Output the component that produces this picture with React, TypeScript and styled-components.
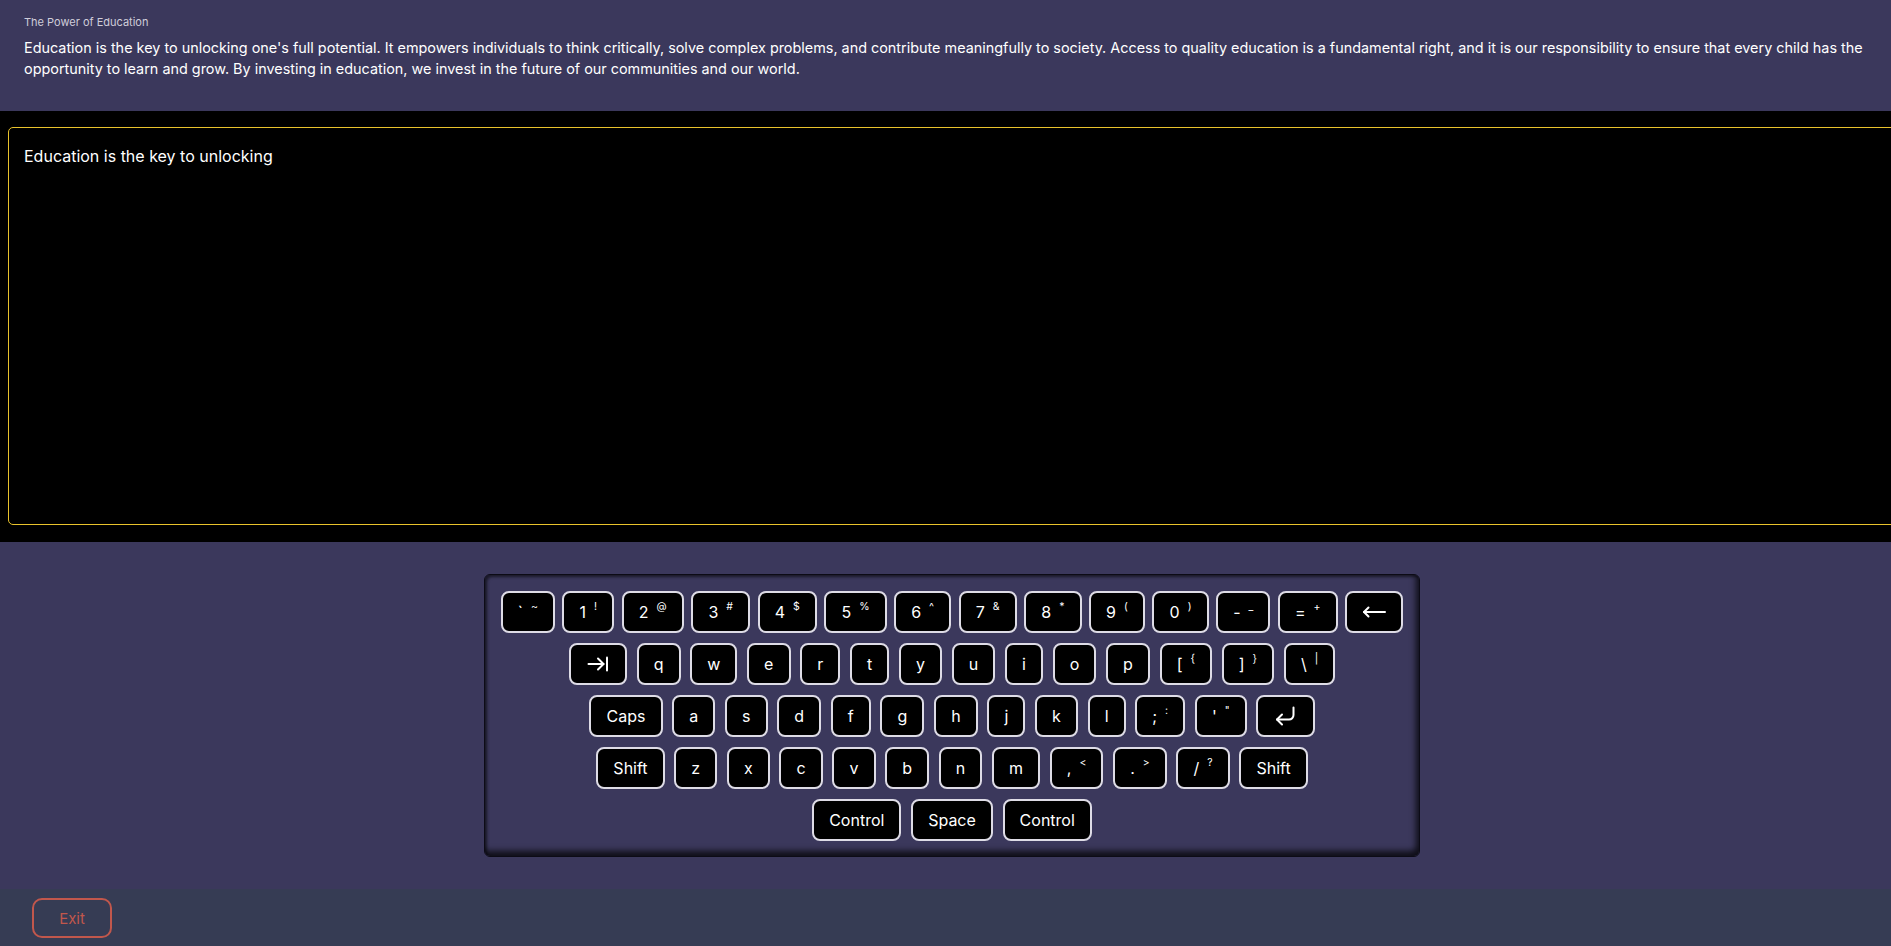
import React from "react";
import styled, { createGlobalStyle } from "styled-components";

const GlobalStyle = createGlobalStyle`
  html, body { margin: 0; padding: 0; background: #000; overflow: hidden; }
  body { font-family: Inter, "Noto Sans", sans-serif; }
  *, *::before, *::after { box-sizing: border-box; }
`;

const Page = styled.div`
  display: flex;
  flex-direction: column;
  width: 1891px;
  height: 946px;
  overflow: hidden;
`;

const Header = styled.header`
  background: #3b385c;
  padding: 14px 16px 32px 24px;
  color: #fff;
`;

const Title = styled.div`
  font-size: 11px;
  line-height: 16px;
  color: #cfcdda;
`;

const Passage = styled.p`
  margin: 7px 0 0;
  font-size: 14.4px;
  line-height: 21px;
  color: #fff;
`;

const TypingSection = styled.section`
  background: #000;
  padding: 16px 0 17px 8px;
  height: 431px;
  overflow: hidden;
`;

const TypingArea = styled.textarea`
  display: block;
  width: 1900px;
  height: 398px;
  background: #000;
  color: #fff;
  border: 1px solid #e9c32c;
  border-radius: 5px;
  padding: 18px 15px;
  font-family: Inter, "Noto Sans", sans-serif;
  font-size: 16px;
  line-height: 20px;
  resize: none;
  outline: none;
`;

const KeyboardSection = styled.section`
  flex: 1;
  background: #3b385c;
  display: flex;
  justify-content: center;
  align-items: flex-start;
  padding: 32px 0 0 13px;
`;

const Keyboard = styled.div`
  width: 936px;
  height: 283px;
  background: #3b385c;
  border: 1px solid #0c0b16;
  border-radius: 6px;
  box-shadow: inset -3px -5px 6px rgba(0, 0, 0, 0.75),
    inset 2px 2px 3px rgba(0, 0, 0, 0.55);
  padding: 16px 16px 14px;
  display: flex;
  flex-direction: column;
  align-items: center;
  gap: 10px;
`;

const Row = styled.div<{ $gap: number }>`
  display: flex;
  gap: ${(p) => p.$gap}px;
`;

const Key = styled.button`
  height: 42px;
  padding: 0 15.1px;
  border: 2px solid #dedce6;
  border-radius: 8px;
  background: #000;
  color: #fff;
  font-family: Inter, "Noto Sans", sans-serif;
  font-size: 16px;
  line-height: 20px;
  display: inline-flex;
  align-items: center;
  justify-content: center;
  white-space: nowrap;
  cursor: pointer;
`;

const Main = styled.span`
  display: block;
`;

const Sup = styled.span`
  align-self: flex-start;
  margin-top: 8px;
  margin-left: 8px;
  font-size: 10.5px;
  line-height: 12px;
`;

const Footer = styled.footer`
  background: #363c54;
  height: 57px;
  padding: 9px 32px;
  display: flex;
  align-items: flex-start;
`;

const ExitButton = styled.button`
  width: 80px;
  height: 40px;
  border: 2px solid #c1574c;
  border-radius: 10px;
  background: transparent;
  color: #c1574c;
  font-family: Inter, "Noto Sans", sans-serif;
  font-size: 15px;
  cursor: pointer;
`;

const Icon = styled.svg`
  display: block;
  width: 24px;
  height: 24px;
  fill: none;
  stroke: #fff;
  stroke-width: 2;
  stroke-linecap: round;
  stroke-linejoin: round;
`;

const TabIcon = () => (
  <Icon viewBox="0 0 24 24">
    <path d="M2.5 12H17.5" />
    <path d="M12 6.5L17.5 12L12 17.5" />
    <path d="M21 5.5V18.5" />
  </Icon>
);

const BackIcon = () => (
  <Icon viewBox="0 0 24 24">
    <path d="M2 12H23" />
    <path d="M6.5 7.5L2 12L6.5 16.5" />
  </Icon>
);

const EnterIcon = () => (
  <Icon viewBox="0 0 24 24">
    <path d="M20.5 3.5V11a4.5 4.5 0 0 1-4.5 4.5H4" />
    <path d="M9 10.5L4 15.5L9 20.5" />
  </Icon>
);

type K = { main?: string; sup?: string; icon?: React.ReactNode };

const rows: { gap: number; keys: K[] }[] = [
  {
    gap: 7.5,
    keys: [
      { main: "`", sup: "~" },
      { main: "1", sup: "!" },
      { main: "2", sup: "@" },
      { main: "3", sup: "#" },
      { main: "4", sup: "$" },
      { main: "5", sup: "%" },
      { main: "6", sup: "^" },
      { main: "7", sup: "&" },
      { main: "8", sup: "*" },
      { main: "9", sup: "(" },
      { main: "0", sup: ")" },
      { main: "-", sup: "_" },
      { main: "=", sup: "+" },
      { icon: <BackIcon /> },
    ],
  },
  {
    gap: 9.6,
    keys: [
      { icon: <TabIcon /> },
      ...["q", "w", "e", "r", "t", "y", "u", "i", "o", "p"].map((c) => ({ main: c })),
      { main: "[", sup: "{" },
      { main: "]", sup: "}" },
      { main: "\\", sup: "|" },
    ],
  },
  {
    gap: 9.6,
    keys: [
      { main: "Caps" },
      ...["a", "s", "d", "f", "g", "h", "j", "k", "l"].map((c) => ({ main: c })),
      { main: ";", sup: ":" },
      { main: "'", sup: '"' },
      { icon: <EnterIcon /> },
    ],
  },
  {
    gap: 9.6,
    keys: [
      { main: "Shift" },
      ...["z", "x", "c", "v", "b", "n", "m"].map((c) => ({ main: c })),
      { main: ",", sup: "<" },
      { main: ".", sup: ">" },
      { main: "/", sup: "?" },
      { main: "Shift" },
    ],
  },
  {
    gap: 9.6,
    keys: [{ main: "Control" }, { main: "Space" }, { main: "Control" }],
  },
];

const passage =
  "Education is the key to unlocking one's full potential. It empowers individuals to think critically, solve complex problems, and contribute meaningfully to society. Access to quality education is a fundamental right, and it is our responsibility to ensure that every child has the opportunity to learn and grow. By investing in education, we invest in the future of our communities and our world.";

export default function App() {
  return (
    <>
      <GlobalStyle />
      <Page>
        <Header>
          <Title>The Power of Education</Title>
          <Passage>{passage}</Passage>
        </Header>
        <TypingSection>
          <TypingArea readOnly value="Education is the key to unlocking" />
        </TypingSection>
        <KeyboardSection>
          <Keyboard>
            {rows.map((row, i) => (
              <Row key={i} $gap={row.gap}>
                {row.keys.map((k, j) => (
                  <Key key={j}>
                    {k.icon ? k.icon : <Main>{k.main}</Main>}
                    {k.sup && <Sup>{k.sup}</Sup>}
                  </Key>
                ))}
              </Row>
            ))}
          </Keyboard>
        </KeyboardSection>
        <Footer>
          <ExitButton>Exit</ExitButton>
        </Footer>
      </Page>
    </>
  );
}
